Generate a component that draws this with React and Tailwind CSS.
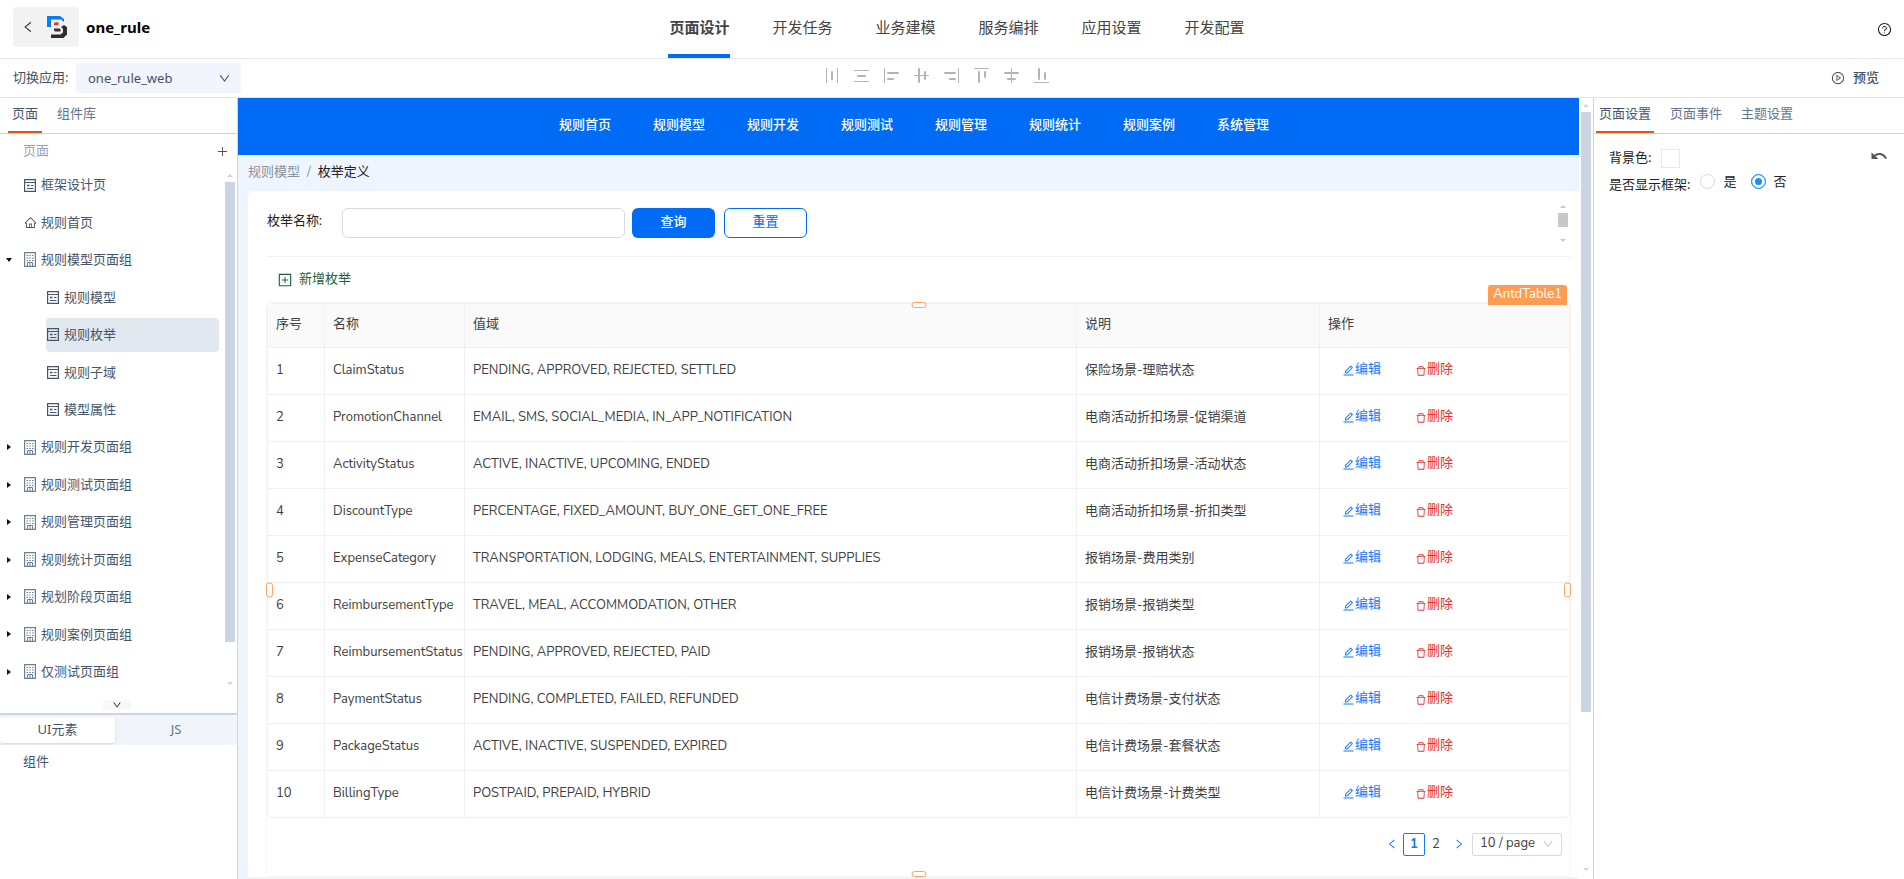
import React, { useState } from 'react';
import {
  AiOutlineDelete,
  AiOutlineDown,
  AiOutlineEdit,
  AiOutlineHome,
  AiOutlineLeft,
  AiOutlinePlayCircle,
  AiOutlinePlus,
  AiOutlinePlusSquare,
  AiOutlineQuestionCircle,
  AiOutlineRight,
} from 'react-icons/ai';
import { MdUndo } from 'react-icons/md';

const topTabs = ['页面设计', '开发任务', '业务建模', '服务编排', '应用设置', '开发配置'];
const siteMenu = ['规则首页', '规则模型', '规则开发', '规则测试', '规则管理', '规则统计', '规则案例', '系统管理'];

const tree = [
  { name: '框架设计页', type: 'page' },
  { name: '规则首页', type: 'home' },
  { name: '规则模型页面组', type: 'group', open: true },
  { name: '规则模型', type: 'page', child: true },
  { name: '规则枚举', type: 'page', child: true },
  { name: '规则子域', type: 'page', child: true },
  { name: '模型属性', type: 'page', child: true },
  { name: '规则开发页面组', type: 'group' },
  { name: '规则测试页面组', type: 'group' },
  { name: '规则管理页面组', type: 'group' },
  { name: '规则统计页面组', type: 'group' },
  { name: '规划阶段页面组', type: 'group' },
  { name: '规则案例页面组', type: 'group' },
  { name: '仅测试页面组', type: 'group' },
];

const rows = [
  ['ClaimStatus', 'PENDING, APPROVED, REJECTED, SETTLED', '保险场景-理赔状态'],
  ['PromotionChannel', 'EMAIL, SMS, SOCIAL_MEDIA, IN_APP_NOTIFICATION', '电商活动折扣场景-促销渠道'],
  ['ActivityStatus', 'ACTIVE, INACTIVE, UPCOMING, ENDED', '电商活动折扣场景-活动状态'],
  ['DiscountType', 'PERCENTAGE, FIXED_AMOUNT, BUY_ONE_GET_ONE_FREE', '电商活动折扣场景-折扣类型'],
  ['ExpenseCategory', 'TRANSPORTATION, LODGING, MEALS, ENTERTAINMENT, SUPPLIES', '报销场景-费用类别'],
  ['ReimbursementType', 'TRAVEL, MEAL, ACCOMMODATION, OTHER', '报销场景-报销类型'],
  ['ReimbursementStatus', 'PENDING, APPROVED, REJECTED, PAID', '报销场景-报销状态'],
  ['PaymentStatus', 'PENDING, COMPLETED, FAILED, REFUNDED', '电信计费场景-支付状态'],
  ['PackageStatus', 'ACTIVE, INACTIVE, SUSPENDED, EXPIRED', '电信计费场景-套餐状态'],
  ['BillingType', 'POSTPAID, PREPAID, HYBRID', '电信计费场景-计费类型'],
];

// thin = guide lines, bold = the bars being aligned
const alignIcons = [
  { label: '水平分布', thin: 'M2.5 0v15M13.5 0v15', bold: 'M8 4v7' },
  { label: '垂直分布', thin: 'M0 2.5h15M0 13.5h15', bold: 'M4 8h7' },
  { label: '左对齐', thin: 'M.5 0v15', bold: 'M4 5h10M4 11h5' },
  { label: '垂直居中', thin: 'M0 7.5h15', bold: 'M5 1v13M11 4v7' },
  { label: '右对齐', thin: 'M14.5 0v15', bold: 'M1 5h10M6 11h5' },
  { label: '顶对齐', thin: 'M0 .5h15', bold: 'M5 4v10M11 4v5' },
  { label: '水平居中', thin: 'M7.5 0v15', bold: 'M1 5h13M4 11h7' },
  { label: '底对齐', thin: 'M0 14.5h15', bold: 'M5 1v10M11 5v6' },
];

function Logo() {
  return (
    <svg width="20" height="22" viewBox="0 0 20 22">
      <path d="M0 0h13l4 3v3l-3-2.500H4V11H0z" fill="#0a7bff" />
      <path d="M8 6.300h3.500v3H7V7.300z" fill="#e5352f" />
      <path d="M7 12.500h5.500l1 1v2H8l-1-1z" fill="#333" />
      <path d="M14 11l3-2 3.400 2.500V18l-4 4H4v-3.600h9.500l2.500-2v-3.400z" fill="#2d2d2d" />
    </svg>
  );
}

function PageIcon() {
  return (
    <svg width="12" height="13" viewBox="0 0 12 13" fill="none" stroke="#475569">
      <path d="M.6 .6h10.800v11.800H.6z" strokeWidth="1.200" />
      <path d="M1 3.500h10M7 6.500h2.500M3 9.500h6.500" />
      <path d="M3 6.500h2.500" strokeWidth="1.600" />
    </svg>
  );
}

function GroupIcon() {
  return (
    <svg width="12" height="15" viewBox="0 0 12 15" fill="none" stroke="#6b8090">
      <path d="M.6 .6h10.800v13.800H.6z" strokeWidth="1.200" />
      <path d="M2.500 3.500h1.500M5.200 3.500h1.500M8 3.500h1.500M2.500 6h1.500M5.200 6h1.500M8 6h1.500M2.500 8.500h1.500M5.200 8.500h1.500M8 8.500h1.500" />
      <path d="M3.500 14v-3.500h5V14M6 10.500V14" />
    </svg>
  );
}

function Arrow({ up, className }) {
  return (
    <svg width="6" height="3" viewBox="0 0 6 3" className={className} fill="currentColor">
      <path d={up ? 'M3 0l3 3H0z' : 'M0 0h6L3 3z'} />
    </svg>
  );
}

function TreeItem({ item, selected, onSelect }) {
  const Icon = item.type === 'group' ? GroupIcon : PageIcon;
  return (
    <li className={item.child ? 'pl-[46px]' : ''}>
      <button
        type="button"
        onClick={onSelect}
        className={`flex h-[34px] w-full items-center gap-[5px] rounded-[4px] text-left ${selected ? 'bg-[#e2e8f0]' : ''} ${item.child ? 'pl-px' : ''}`}
      >
        {!item.child && (
          <span className="flex w-[19px] shrink-0 pl-[6px]">
            {item.type === 'group' && (
              <svg width="6" height="6" viewBox="0 0 6 6" fill="#111">
                <path d={item.open ? 'M0 1h6L3 5z' : 'M1 0l4 3-4 3z'} />
              </svg>
            )}
          </span>
        )}
        {item.type === 'home' ? <AiOutlineHome size={13} className="-mr-px" /> : <Icon />}
        <span>{item.name}</span>
      </button>
    </li>
  );
}

function LeftPanel() {
  const [current, setCurrent] = useState('规则枚举');

  return (
    <aside className="flex w-[238px] shrink-0 flex-col border-r border-[#cbd5e1] text-[13px] text-[#475569]">
      <nav className="flex h-9 shrink-0 border-b border-[#cbd5e1] pl-2">
        <button type="button" className="border-b-2 border-[#e15615] px-1 pb-px">页面</button>
        <button type="button" className="ml-[11px] px-1 pb-[3px] text-[#64748b]">组件库</button>
      </nav>
      <div className="flex h-[34px] shrink-0 items-center justify-between pr-2 pl-[23px]">
        <span className="text-[#94a3b8]">页面</span>
        <button type="button" aria-label="新增页面">
          <AiOutlinePlus size={13} />
        </button>
      </div>
      <div className="flex min-h-0 flex-1">
        <ul className="flex flex-1 flex-col justify-between pr-[6px] pb-[24px]">
          {tree.map((item) => (
            <TreeItem
              key={item.name + item.type}
              item={item}
              selected={item.name === current}
              onSelect={() => setCurrent(item.name)}
            />
          ))}
        </ul>
        <div className="flex w-3 flex-col items-center pt-[6px] pr-[2px] pb-[28px] text-[#cbd5e1]">
          <Arrow up />
          <div className="mt-[5px] mb-10 w-[10px] flex-1 bg-[#cbd5e1]" />
          <Arrow />
        </div>
      </div>
      <div className="relative h-[166px] shrink-0 border-t-2 border-[#cbd5e1]">
        <button type="button" aria-label="收起" className="absolute -top-[15px] left-[103px] flex h-[10px] w-7 items-center justify-center rounded-t bg-[#f8f8f8] text-black">
          <AiOutlineDown size={10} />
        </button>
        <div className="flex h-[30px] rounded-r bg-[#f1f5f9] py-[2px]">
          <button type="button" className="w-[115px] rounded-[3px] bg-white shadow">UI元素</button>
          <button type="button" className="flex-1 text-[#64748b]">JS</button>
        </div>
        <p className="px-[23px] pt-[6px] leading-5">组件</p>
      </div>
    </aside>
  );
}

function EnumTable() {
  return (
    <table className="w-full table-fixed border-separate border-spacing-0 rounded-[6px] border-t border-l border-[#f0f0f0] text-left whitespace-nowrap text-[#404040]">
      <colgroup>
        <col className="w-[57px]" />
        <col className="w-[140px]" />
        <col />
        <col className="w-[243px]" />
        <col className="w-[250px]" />
      </colgroup>
      <thead>
        <tr className="h-[44px] bg-[#fafafa]">
          {['序号', '名称', '值域', '说明', '操作'].map((title) => (
            <th key={title} className="border-r border-b border-[#f0f0f0] px-2 pb-px font-normal">{title}</th>
          ))}
        </tr>
      </thead>
      <tbody>
        {rows.map(([name, values, desc], index) => (
          <tr key={name} className="group h-[47px]">
            <td className="border-r border-b border-[#f0f0f0] px-2 pb-px group-last:rounded-bl-[6px]">{index + 1}</td>
            <td className="border-r border-b border-[#f0f0f0] pb-px pl-2">{name}</td>
            <td className="border-r border-b border-[#f0f0f0] px-2 pb-px">{values}</td>
            <td className="border-r border-b border-[#f0f0f0] px-2 pb-px">{desc}</td>
            <td className="border-r border-b border-[#f0f0f0] pb-[3px] pl-[22px] group-last:rounded-br-[6px]">
              <div className="flex gap-[34px]">
                <button type="button" className="flex items-center text-[#1677ff]">
                  <AiOutlineEdit size={13} className="mt-[2px]" />编辑
                </button>
                <button type="button" className="flex items-center text-[#e03131]">
                  <AiOutlineDelete size={12} className="mt-[2px]" />删除
                </button>
              </div>
            </td>
          </tr>
        ))}
      </tbody>
    </table>
  );
}

function Pagination() {
  return (
    <div className="flex h-6 items-center justify-end pr-2 text-[#404040]">
      <button type="button" aria-label="上一页" className="text-[#1677ff]"><AiOutlineLeft size={12} /></button>
      <button type="button" className="ml-[5px] h-[23px] w-[22px] rounded-[2px] border border-[#1677ff] pt-px font-bold text-[#1677ff]">1</button>
      <button type="button" className="w-[22px] pt-px">2</button>
      <button type="button" aria-label="下一页" className="ml-[6px] text-[#1677ff]"><AiOutlineRight size={12} /></button>
      <div className="relative ml-[7px] flex items-center">
        <select aria-label="每页条数" className="h-[23px] w-[90px] appearance-none rounded-[2px] border border-[#d9d9d9] bg-white pb-[2px] pl-[7px]">
          <option>10 / page</option>
        </select>
        <AiOutlineDown size={12} className="pointer-events-none absolute right-2 text-[#bfbfbf]" />
      </div>
    </div>
  );
}

function Canvas() {
  return (
    <main className="flex min-w-0 flex-1">
      <div className="flex min-w-0 flex-1 flex-col bg-[#eef5ff] font-['Nunito_Sans','Noto_Sans','Noto_Sans_CJK_SC',sans-serif] text-[13px]">
        <nav className="flex h-[57px] shrink-0 items-center justify-center gap-[42px] bg-[#006cf6] pb-[2px] pl-[11px] font-medium whitespace-nowrap text-white">
          {siteMenu.map((name) => (
            <a key={name} href="#">{name}</a>
          ))}
        </nav>
        <div className="flex h-9 shrink-0 items-center gap-[7px] pl-[10px] text-[#222]">
          <a href="#" className="text-[#8b919b]">规则模型</a>
          <span className="text-[#8b919b]">/</span>
          <span>枚举定义</span>
        </div>
        <section className="mb-[2px] ml-[10px] flex flex-1 flex-col rounded-tl-[5px] bg-white pr-[9px] pl-[19px]">
          <div className="flex h-[66px] shrink-0 justify-between border-b border-[#f0f0f0] pr-[2px]">
            <form className="flex pt-[17px]" onSubmit={(e) => e.preventDefault()}>
              <label htmlFor="enumName" className="w-[75px] pt-[3px] leading-5 text-[#222]">枚举名称:</label>
              <input id="enumName" type="text" className="h-[30px] w-[283px] rounded-[6px] border border-[#d9d9d9] px-2" />
              <button type="submit" className="ml-[7px] h-[30px] w-[83px] rounded-[6px] bg-[#006cf6] font-medium text-white">查询</button>
              <button type="reset" className="ml-[9px] h-[30px] w-[83px] rounded-[6px] border border-[#006cf6] text-[#006cf6]">重置</button>
            </form>
            <div className="flex w-[10px] flex-col items-center pt-[14px] text-[#c8c8c8]">
              <Arrow up />
              <div className="mt-[5px] mb-3 h-[14px] w-[10px] bg-[#c8c8c8]" />
              <Arrow />
            </div>
          </div>
          <div className="flex h-[45px] shrink-0 items-center pt-px pl-[10px]">
            <button type="button" className="flex items-center gap-[6px] text-[#1c6139]">
              <AiOutlinePlusSquare size={16} />
              新增枚举
            </button>
          </div>
          <div className="relative -mr-px -ml-px flex-1 rounded-[4px] border border-[#faf6f3]">
            <span className="absolute right-[3px] -top-[18px] z-10 h-5 rounded-t-[3px] bg-[#ff9c50] px-[5px] leading-[18px] text-white">AntdTable1</span>
            <i className="absolute -top-px left-1/2 h-[6px] w-[15px] -translate-x-1/2 rounded-[3px] border border-[#ffa25c] bg-white" />
            <i className="absolute -bottom-px left-1/2 h-[6px] w-[15px] -translate-x-1/2 rounded-[3px] border border-[#ffa25c] bg-white" />
            <i className="absolute top-1/2 -left-px h-[15px] w-[7px] -translate-y-1/2 rounded-[3px] border border-[#ffa25c] bg-white" />
            <i className="absolute top-1/2 -right-px h-[15px] w-[7px] -translate-y-1/2 rounded-[3px] border border-[#ffa25c] bg-white" />
            <EnumTable />
            <div className="pt-[14px]">
              <Pagination />
            </div>
          </div>
        </section>
      </div>
      <div className="flex w-[14px] flex-col items-center pt-[6px] pb-[8px] text-[#cbd5e1]">
        <Arrow up />
        <div className="mt-[5px] h-[600px] w-[10px] bg-[#cbd5e1]" />
        <Arrow className="mt-auto" />
      </div>
    </main>
  );
}

function RightPanel() {
  const [framed, setFramed] = useState('no');
  const radio = 'm-0 size-[15px] appearance-none rounded-full border border-[#d9d9d9] checked:border-[#1890ff] checked:bg-[#1890ff] checked:shadow-[inset_0_0_0_3px_white]';

  return (
    <aside className="w-[311px] shrink-0 border-l border-[#cbd5e1] text-[13px] text-[#222]">
      <nav className="flex h-9 gap-[13px] border-b border-[#cbd5e1] pl-[2px] text-[#64748b]">
        <button type="button" className="border-b-2 border-[#e15615] px-[3px] pb-px text-[#475569]">页面设置</button>
        <button type="button" className="px-[3px] pb-[3px]">页面事件</button>
        <button type="button" className="px-[3px] pb-[3px]">主题设置</button>
      </nav>
      <div className="flex flex-col pt-[13px] pr-4 pl-[15px]">
        <div className="flex items-center">
          <label htmlFor="bgColor" className="w-[52px]">背景色:</label>
          <button id="bgColor" type="button" aria-label="背景色" className="size-[19px] border border-[#e8e8e8] bg-white" />
          <button type="button" aria-label="撤销" className="ml-auto pb-1 text-[#555]">
            <MdUndo size={18} />
          </button>
        </div>
        <fieldset className="flex items-center">
          <span className="mr-[10px] pt-[6px]">是否显示框架:</span>
          <label className="flex items-center gap-2">
            <input type="radio" name="framed" className={radio} checked={framed === 'yes'} onChange={() => setFramed('yes')} />是
          </label>
          <label className="ml-[14px] flex items-center gap-2">
            <input type="radio" name="framed" className={radio} checked={framed === 'no'} onChange={() => setFramed('no')} />否
          </label>
        </fieldset>
      </div>
    </aside>
  );
}

function App() {
  return (
    <div className="flex h-screen flex-col overflow-hidden bg-white font-['Noto_Sans','Noto_Sans_CJK_SC',sans-serif]">
      <header className="grid h-[59px] shrink-0 grid-cols-[1fr_auto_1fr] border-b border-[#e5e7eb]">
        <div className="flex items-center pb-1 pl-[13px]">
          <button type="button" aria-label="返回" className="flex h-10 w-[66px] items-center gap-3 rounded-[4px] bg-[#f2f2f2] pl-2 text-[#333]">
            <AiOutlineLeft size={14} />
            <Logo />
          </button>
          <h1 className="pl-[7px] text-[15px] font-bold text-black">one_rule</h1>
        </div>
        <nav className="flex gap-[41px] pl-[10px] text-[15px] text-[#444]">
          {topTabs.map((name, index) => (
            <button
              key={name}
              type="button"
              className={`border-b-4 px-px ${index === 0 ? 'border-[#006cf6] font-bold' : 'border-transparent'}`}
            >
              {name}
            </button>
          ))}
        </nav>
        <div className="flex items-center justify-end pr-3 text-[#222]">
          <button type="button" aria-label="帮助"><AiOutlineQuestionCircle size={15} /></button>
        </div>
      </header>

      <div className="grid h-[39px] shrink-0 grid-cols-[1fr_auto_1fr] items-center border-b border-[#e2e4e8] text-[13px] text-[#475060]">
        <div className="flex items-center pl-[13px]">
          <label htmlFor="appSelect" className="w-[63px]">切换应用:</label>
          <div className="relative flex items-center">
            <select id="appSelect" className="h-[30px] w-[165px] appearance-none rounded-[4px] bg-[#f2f5fe] pt-px pl-3">
              <option>one_rule_web</option>
            </select>
            <AiOutlineDown size={13} className="pointer-events-none absolute right-[10px]" />
          </div>
        </div>
        <div className="flex gap-[15px] pr-8 pb-[5px] text-[#b4b4b4]">
          {alignIcons.map((icon) => (
            <button key={icon.label} type="button" aria-label={icon.label}>
              <svg width="15" height="15" viewBox="0 0 15 15" fill="none" stroke="currentColor">
                <path d={icon.thin} />
                <path d={icon.bold} strokeWidth="2" strokeLinecap="round" />
              </svg>
            </button>
          ))}
        </div>
        <div className="flex justify-end pr-[25px]">
          <button type="button" className="flex items-center gap-2 font-medium">
            <AiOutlinePlayCircle size={14} />
            预览
          </button>
        </div>
      </div>

      <div className="flex min-h-0 flex-1">
        <LeftPanel />
        <Canvas />
        <RightPanel />
      </div>
    </div>
  );
}

export default App;
